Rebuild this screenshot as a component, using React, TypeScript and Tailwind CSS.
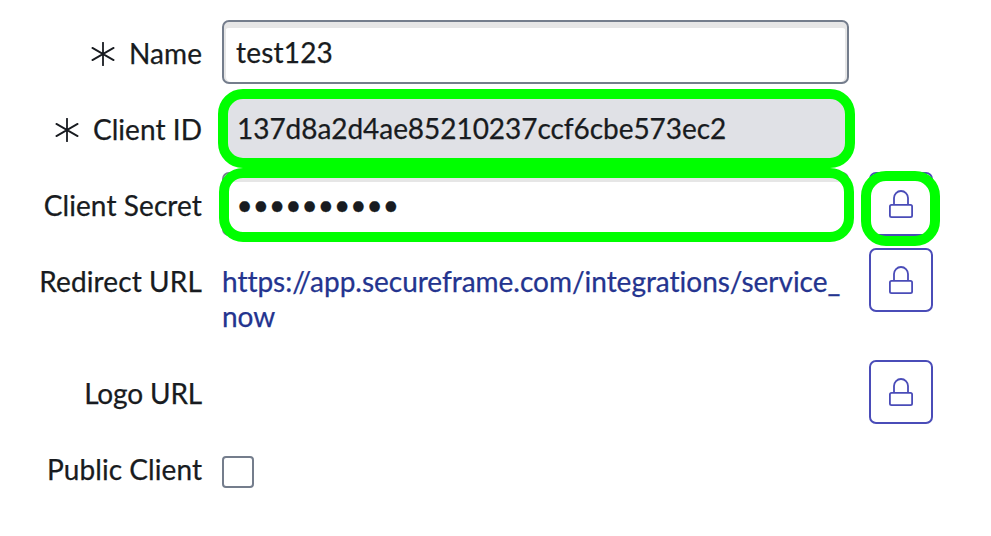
import React from "react";

interface FieldRowProps {
  label: string;
  required?: boolean;
  children?: React.ReactNode;
  action?: React.ReactNode;
  className?: string;
  labelClassName?: string;
}

const RequiredMark = () => (
  <svg width="24" height="24" viewBox="0 0 24 24" fill="none" stroke="#181b20" strokeWidth="1.8" strokeLinecap="round" className="mt-px mr-[14px]">
    <path d="M12 0.7V23.3M1.4 5.9L22.6 18.1M22.6 5.9L1.4 18.1" />
  </svg>
);

const LockIcon = () => (
  <svg width="24" height="28" viewBox="0 0 24 28" fill="none" stroke="#4a4cb8" strokeWidth="1.8">
    <rect x="0.9" y="14.9" width="22.2" height="12.2" rx="1.6" />
    <path d="M5 14.9V8a7 7 0 0 1 14 0v6.9" />
  </svg>
);

const LockButton = () => (
  <button title="Toggle lock" className="flex h-16 w-16 items-center justify-center rounded-[7px] border-2 border-[#4a4cb8] bg-white">
    <LockIcon />
  </button>
);

const FieldRow: React.FC<FieldRowProps> = ({
  label,
  required,
  children,
  action,
  className = "h-16",
  labelClassName = "tracking-[0.06px]",
}) => (
  <div className={`flex items-start ${className}`}>
    <div className="flex h-16 w-[202px] shrink-0 items-center justify-end pt-[2px]">
      {required && <RequiredMark />}
      <span className={`-mt-px whitespace-nowrap ${labelClassName}`}>{label}</span>
    </div>
    <div className="ml-5 w-[627px] shrink-0">{children}</div>
    {action && <div className="relative ml-5">{action}</div>}
  </div>
);

const App = () => {
  return (
    <div className="flex h-[536px] w-[991px] flex-col gap-3 overflow-hidden bg-white pt-5 font-['Lato',sans-serif] text-[28px] leading-9 text-[#181b20] [-webkit-text-stroke:0.25px] [font-variant-ligatures:none]">
      <FieldRow label="Name" required>
        <div className="flex h-16 items-center rounded-[7px] border-2 border-[#747d8c] bg-white px-3 tracking-[0.2px] shadow-[inset_0_6px_0_0_#e6e6e6,inset_2px_0_0_0_#e6e6e6,inset_-2px_0_0_0_#e6e6e6]">
          test123
        </div>
      </FieldRow>

      <FieldRow label="Client ID" required>
        <div className="relative flex h-16 items-center rounded-[7px] bg-[#e0e1e6] px-[15px] tracking-[-0.05px]">
          137d8a2d4ae85210237ccf6cbe573ec2
          {/* highlight */}
          <div className="absolute -top-[7px] -left-1 h-[79px] w-[637px] rounded-[25px] border-10 border-[#00ff00]" />
        </div>
      </FieldRow>

      <FieldRow
        label="Client Secret"
        labelClassName="tracking-[0.1px]"
        action={
          <>
            <LockButton />
            <div className="absolute -top-px -left-2 h-[75px] w-[79px] rounded-[25px] border-10 border-[#00ff00]" />
          </>
        }
      >
        <div className="relative h-16">
          <div className="flex h-16 items-center rounded-[7px] border-2 border-[#747d8c] bg-white px-[12.5px] shadow-[inset_0_8px_0_0_#e6e6e6]">
            ••••••••••
          </div>
          <div className="absolute -top-1 -left-[3px] h-[74px] w-[635px] rounded-[24px] border-10 border-[#00ff00]" />
        </div>
      </FieldRow>

      <FieldRow label="Redirect URL" labelClassName="tracking-[0.12px]" className="h-[100px]" action={<LockButton />}>
        <a href="#" className="block pt-4 leading-[35px] tracking-[-0.02px] break-all text-[#24348f]">
          https://app.secureframe.com/integrations/service_<wbr />now
        </a>
      </FieldRow>

      <FieldRow label="Logo URL" labelClassName="tracking-[-0.15px]" action={<LockButton />} />

      <FieldRow label="Public Client">
        <div className="mt-5 h-8 w-8 rounded-[4px] border-2 border-[#747d8c] bg-white" />
      </FieldRow>
    </div>
  );
};

export default App;
